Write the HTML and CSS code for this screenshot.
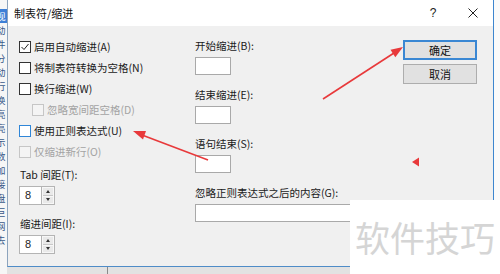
FILE: index.html
```html
<!DOCTYPE html>
<html lang="zh-CN">
<head>
    <meta charset="UTF-8">
    <title>制表符/缩进</title>
    <link rel="stylesheet" href="styles.css">
</head>
<body>
<div class="screen">
    <div class="editor">
        <span class="sel">视</span><span>动</span><span>件</span><span>分</span><span>动</span><span>行</span><span>换</span><span>亮</span><span>亮</span><span>示</span><span>数</span><span>加</span><span>接</span><span>盘</span><span>巨</span><span>网</span><span>去</span>
    </div>
    <div class="stage">
        <div class="dialog">
            <div class="titlebar">
                <span class="title">制表符/缩进</span>
                <span class="tb-btn">?</span>
                <span class="tb-btn">
                    <svg width="10" height="10" viewBox="0 0 10 10"><path d="M0.5 0.5L9.5 9.5M9.5 0.5L0.5 9.5" stroke="#222" stroke-width="1"/></svg>
                </span>
            </div>
            <div class="body">
                <div class="col-left">
                    <div class="chk"><span class="box"><svg width="10" height="10" viewBox="0 0 10 10"><path d="M1.5 5L4 7.5L8.5 2" fill="none" stroke="#222" stroke-width="1"/></svg></span>启用自动缩进(A)</div>
                    <div class="chk"><span class="box"></span>将制表符转换为空格(N)</div>
                    <div class="chk"><span class="box"></span>换行缩进(W)</div>
                    <div class="chk sub off"><span class="box"></span>忽略宽间距空格(D)</div>
                    <div class="chk hover"><span class="box"></span>使用正则表达式(U)</div>
                    <div class="chk off"><span class="box"></span>仅缩进新行(O)</div>
                    <div class="lbl first">Tab 间距(T):</div>
                    <div class="spin"><span class="spin-val">8</span><span class="spin-btns"><span class="up"></span><span class="down"></span></span></div>
                    <div class="lbl">缩进间距(I):</div>
                    <div class="spin"><span class="spin-val">8</span><span class="spin-btns"><span class="up"></span><span class="down"></span></span></div>
                </div>
                <div class="col-mid">
                    <div class="grp">
                        <div class="lbl">开始缩进(B):</div>
                        <div class="field"></div>
                    </div>
                    <div class="grp">
                        <div class="lbl">结束缩进(E):</div>
                        <div class="field"></div>
                    </div>
                    <div class="grp">
                        <div class="lbl">语句结束(S):</div>
                        <div class="field"></div>
                    </div>
                    <div class="grp">
                        <div class="lbl">忽略正则表达式之后的内容(G):</div>
                        <div class="field wide"></div>
                    </div>
                </div>
                <div class="col-btns">
                    <div class="btn default">确定</div>
                    <div class="btn">取消</div>
                </div>
            </div>
        </div>
        <div class="below"><span class="seam"></span></div>
    </div>
    <div class="rightgap"></div>
</div>
<svg class="marks" width="500" height="274" viewBox="0 0 500 274">
    <line x1="323" y1="99" x2="394" y2="53" stroke="#e8393b" stroke-width="1.6"/>
    <polygon points="403,47 395.3,57.2 390.5,49.8" fill="#e8393b"/>
    <line x1="208" y1="160" x2="142" y2="135" stroke="#e8393b" stroke-width="1.6"/>
    <polygon points="133,131 146,131 143,139.5" fill="#e8393b"/>
    <polygon points="412,162 419,157.5 419,166.5" fill="#e8393b"/>
</svg>
<div class="watermark">软件技巧</div>
</body>
</html>
```

FILE: styles.css
```css
*{
    margin:0;
    padding:0;
    box-sizing: border-box;
}
html,body{
    width: 500px;
    height: 274px;
    overflow: hidden;
}
body{
    position: relative;
    font-family: "Noto Sans CJK SC", "Microsoft YaHei", sans-serif;
    font-size: 10.5px;
    color: #1a1a1a;
    background: #e4e4e4;
}
.screen{
    display: flex;
    height: 274px;
}
/* editor behind the dialog, only a sliver shows */
.editor{
    width: 7px;
    flex-shrink: 0;
    overflow: hidden;
    background: #f6f6f6;
    padding-top: 9px;
    display: flex;
    flex-direction: column;
}
.editor span{
    display: block;
    height: 14px;
    line-height: 14px;
    font-size: 9.5px;
    color: #3a5a8a;
    margin-left: -4px;
    white-space: nowrap;
}
.editor span.sel{
    background: #3d7fd6;
    color: #fff;
}
.stage{
    width: 487px;
    flex-shrink: 0;
    display: flex;
    flex-direction: column;
}
.rightgap{
    flex: 1;
    background: #fafafa;
}
.dialog{
    height: 267px;
    background: #f0f0f0;
    border-left: 1px solid #8da4bd;
    border-right: 1px solid #3e86cf;
    border-bottom: 1px solid #4f8cc8;
    display: flex;
    flex-direction: column;
}
.titlebar{
    height: 26px;
    background: #fff;
    display: flex;
    align-items: center;
    padding-left: 6px;
}
.title{
    flex: 1;
    font-size: 11px;
    color: #111;
}
.tb-btn{
    width: 40px;
    height: 26px;
    display: flex;
    align-items: center;
    justify-content: center;
    font-family: "Liberation Sans", sans-serif;
    font-size: 12px;
    color: #222;
}
.body{
    flex: 1;
    display: flex;
    padding: 10px 0 0 11px;
}
.col-left{
    width: 176px;
}
.chk{
    height: 21px;
    display: flex;
    align-items: center;
    line-height: 21px;
    white-space: nowrap;
}
.chk .box{
    width: 12px;
    height: 12px;
    margin-right: 3px;
    border: 1px solid #333;
    background: #fff;
    display: flex;
    align-items: center;
    justify-content: center;
}
.chk.sub{
    padding-left: 13px;
}
.chk.off{
    color: #a3a3a3;
}
.chk.off .box{
    border-color: #c6c6c6;
    background: #f4f4f4;
}
.chk.hover .box{
    border-color: #2f86d8;
}
.lbl{
    height: 14px;
    line-height: 14px;
    white-space: nowrap;
}
.col-left .lbl{
    margin-top: 12px;
    padding-left: 1px;
}
.col-left .lbl.first{
    margin-top: 6px;
}
.spin{
    margin-top: 4px;
    width: 36px;
    height: 19px;
    display: flex;
}
.spin-val{
    width: 22px;
    background: #fff;
    border: 1px solid #b4b4b4;
    border-right: none;
    padding-left: 5px;
    font-family: "Liberation Sans", sans-serif;
    font-size: 11px;
    line-height: 17px;
    color: #222;
}
.spin-btns{
    width: 14px;
    border: 1px solid #b4b4b4;
    background: #f7f7f7;
    display: flex;
    flex-direction: column;
}
.spin-btns span{
    flex: 1;
    display: flex;
    align-items: center;
    justify-content: center;
    background: #e9e9e9;
    margin: 1px;
}
.spin-btns .up{
    margin-bottom: 0;
    border-bottom: 1px solid #c8c8c8;
}
.spin-btns .up::after,
.spin-btns .down::after{
    content: "";
    width: 0;
    height: 0;
    border-left: 2.5px solid transparent;
    border-right: 2.5px solid transparent;
}
.spin-btns .up::after{
    border-bottom: 3px solid #333;
}
.spin-btns .down::after{
    border-top: 3px solid #333;
}
.col-mid{
    width: 208px;
    padding-top: 3px;
}
.grp{
    margin-bottom: 13px;
}
.field{
    margin-top: 4px;
    width: 36px;
    height: 18px;
    background: #fff;
    border: 1px solid #a9a9a9;
}
.field.wide{
    width: 282px;
}
.col-btns{
    width: 74px;
    padding-top: 4px;
}
.btn{
    height: 20px;
    margin-bottom: 4px;
    background: #e1e1e1;
    border: 1px solid #adadad;
    text-align: center;
    line-height: 18px;
    font-size: 11px;
    color: #111;
}
.btn.default{
    border: 2px solid #3a87d3;
    line-height: 16px;
}
.below{
    flex: 1;
    background: #e2e2e2;
    position: relative;
}
.seam{
    position: absolute;
    left: 100px;
    top: 0;
    bottom: 0;
    width: 1px;
    background: #8a8a8a;
}
/* annotations drawn over the screenshot */
.marks{
    position: absolute;
    left: 0;
    top: 0;
}
.watermark{
    position: absolute;
    right: 0;
    bottom: 0;
    width: 150px;
    height: 74px;
    background: #fff;
    color: #d5d5d5;
    font-size: 35px;
    line-height: 74px;
    text-align: center;
    white-space: nowrap;
}
```
